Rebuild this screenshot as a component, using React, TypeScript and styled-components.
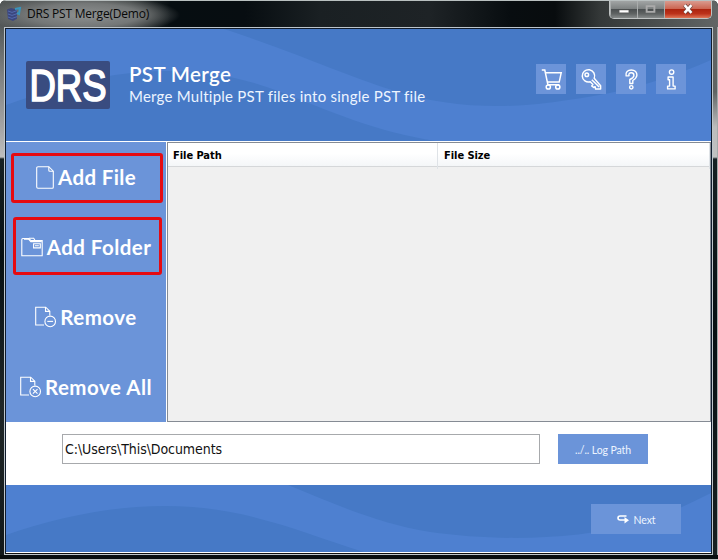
import React from "react";
import styled, { createGlobalStyle, css } from "styled-components";

const GlobalStyle = createGlobalStyle`
  html, body { margin: 0; padding: 0; overflow: hidden; }
  * { box-sizing: border-box; }
`;

const brandFont = css`font-family: Lato, "Open Sans", sans-serif;`;
const systemFont = css`font-family: "DejaVu Sans Condensed", "DejaVu Sans", sans-serif; font-stretch: condensed;`;

const WindowFrame = styled.div`
  width: 718px;
  height: 560px;
  display: grid;
  grid-template-columns: 4px 709px 5px;
  grid-template-rows: 27px 528px 5px;
  background: #0b1012;
  border-radius: 6px 6px 0 0;
  overflow: hidden;
`;

const TitleBar = styled.header`
  grid-column: 1 / -1;
  display: flex;
  align-items: flex-start;
  border-top: 1px solid #b9c0c0;
  padding-left: 6px;
  background:
    radial-gradient(ellipse 96px 20px at 84px 14px, #8d9090 0%, #747777 58%, rgba(70, 74, 75, 0) 100%),
    linear-gradient(90deg, #545858 0, #343939 130px, #060d11 170px, #070d11 245px, #1a2023 320px, #1e2326 430px, #080d10 510px, #080c0e 555px, #343838 600px, #626666 718px);
`;

const AppIcon = styled.svg`
  width: 16px;
  height: 16px;
  margin-top: 5px;
  flex: none;
`;

const WindowTitle = styled.span`
  font: 12px/17px "Open Sans", "Noto Sans", sans-serif;
  letter-spacing: -0.2px;
  color: #080808;
  margin: 4px auto 0 5px;
`;

const WindowControls = styled.div`
  display: flex;
  height: 18px;
  margin-right: 6px;
  border: 1px solid #bfc3c3;
  border-top: 0;
  border-radius: 0 0 5px 5px;
  overflow: hidden;
`;

const ControlButton = styled.button<{ $width: number; $close?: boolean }>`
  width: ${(p) => p.$width}px;
  height: 17px;
  padding: 0;
  border: 0;
  border-left: ${(p) => (p.$width === 27 || p.$close ? "1px solid #aaadad" : "0")};
  background: ${(p) =>
    p.$close
      ? "linear-gradient(#d99b8f 0, #cc6652 45%, #ad2510 50%, #bc321b 75%, #df7657 100%)"
      : "linear-gradient(#a1a4a4 0, #7e8282 45%, #4c5051 50%, #5f6363 75%, #878b8b 100%)"};
  svg { display: block; width: 100%; height: 17px; }
`;

const LeftEdge = styled.div`
  background: linear-gradient(#555a5a 0, #7c7f7f 45px, #a4a4a4 100px, #bebebe 130px, #172124 132px, #071013 230px, #202728 380px, #11181a 100%);
`;
const RightEdge = styled.div`
  background: linear-gradient(#5d6161 0, #606464 65px, #bcbcbc 100px, #c1c1c1 130px, #172124 132px, #071013 300px, #182022 100%);
  border-right: 1px solid #a4aaaa;
`;
const BottomEdge = styled.div`
  grid-column: 1 / -1;
  background: #080d0f;
  border-bottom: 1px solid #bbc0c0;
`;

const Client = styled.main`
  border: 1px solid #bdc5cb;
  background: #fff;
`;

const ClientInner = styled.div`
  height: 526px;
  border: 1px solid #101c2d;
  border-bottom-color: #101010;
  display: flex;
  flex-direction: column;
`;

const WavePanel = styled.div<{ $height: number }>`
  display: grid;
  flex: none;
  height: ${(p) => p.$height}px;
  background: #4679c6;
  > * { grid-area: 1 / 1; }
`;

const Wave = styled.svg`
  width: 705px;
  height: 100%;
  display: block;
  fill: #4e80d0;
`;

const HeaderContent = styled.div`
  display: flex;
  align-items: flex-start;
  padding: 32px 25px 0 20px;
`;

const Logo = styled.svg`
  width: 84px;
  height: 48px;
  flex: none;
  overflow: visible;
`;

const ProductText = styled.div`
  ${brandFont}
  color: #fff;
  margin: 1px auto 0 19px;
  white-space: nowrap;
`;

const ProductName = styled.h1`
  font-size: 20.5px;
  line-height: 24px;
  font-weight: 600;
  letter-spacing: 0.35px;
  margin: 0;
`;

const ProductTagline = styled.p`
  font-size: 15px;
  line-height: 20px;
  letter-spacing: 0.24px;
  margin: 0;
  color: #edf4ff;
`;

const HeaderActions = styled.nav`
  display: flex;
  gap: 10px;
  margin-top: 3px;
`;

const IconButton = styled.button`
  width: 30px;
  height: 30px;
  border: 0;
  padding: 0;
  background: #6c94d9;
  svg { display: block; width: 30px; height: 30px; }
`;

const Workspace = styled.div`
  height: 281px;
  flex: none;
  display: flex;
  border-top: 1px solid #fff;
`;

const Sidebar = styled.aside`
  width: 160px;
  flex: none;
  margin-right: 1px;
  background: #6b94d9;
  display: grid;
  grid-template-rows: repeat(4, 70px);
`;

const SideButton = styled.button<{ $gap: number; $spacing: number }>`
  ${brandFont}
  position: relative;
  display: flex;
  align-items: center;
  justify-content: center;
  gap: ${(p) => p.$gap}px;
  border: 0;
  padding: 0;
  background: transparent;
  color: #fff;
  font-size: 20.5px;
  line-height: 26px;
  font-weight: 700;
  letter-spacing: ${(p) => p.$spacing}px;
  white-space: nowrap;
  svg { flex: none; overflow: visible; }
`;

const Highlight = styled.span<{ $top: number; $left: number; $width: number; $height: number }>`
  position: absolute;
  top: ${(p) => p.$top}px;
  left: ${(p) => p.$left}px;
  width: ${(p) => p.$width}px;
  height: ${(p) => p.$height}px;
  border: 3px solid #e50b12;
  border-radius: 3px;
`;

const FileTable = styled.section`
  flex: 1;
  border: 1px solid #858b94;
  background: #f0f0f0;
`;

const TableHeader = styled.div`
  height: 24px;
  display: grid;
  grid-template-columns: 270px 1fr;
  background: linear-gradient(#fff 45%, #f4f6f8);
  border-bottom: 1px solid #d5d7d9;
`;

const ColumnTitle = styled.div`
  ${systemFont}
  font-size: 11px;
  font-weight: 700;
  line-height: 26px;
  letter-spacing: -0.05px;
  padding-left: 5px;
  border-right: 1px solid #dfe3e7;
  & + & { padding-left: 6px; }
`;

const PathRow = styled.div`
  height: 63px;
  flex: none;
  display: flex;
  align-items: flex-start;
  gap: 18px;
  padding: 12px 0 0 56px;
`;

const PathInput = styled.input`
  ${systemFont}
  width: 478px;
  height: 30px;
  padding: 0 2px 1px;
  border: 1px solid #a7a9ac;
  border-radius: 0;
  background: #fff;
  color: #111;
  font-size: 14px;
  letter-spacing: -0.07px;
  outline: 0;
`;

const ActionButton = styled.button`
  ${brandFont}
  width: 90px;
  height: 30px;
  border: 0;
  padding: 1px 0 0;
  display: flex;
  align-items: center;
  justify-content: center;
  gap: 5px;
  background: #6b94d9;
  color: #edf5ff;
  font-size: 10.5px;
  letter-spacing: -0.1px;
`;

const FooterContent = styled.div`
  display: flex;
  justify-content: flex-end;
  padding: 19px 30px 0 0;
`;

const FileOutline = ({ badge }: { badge?: "minus" | "cross" }) =>
  badge ? (
    <svg width="21" height="22" viewBox="0 0 21 22" fill="none" stroke="#fff" strokeWidth="1.1">
      <path d="M9 19H.7V1.2h10l4.1 4v4.4M10.5 1.4v4h4.2" />
      <circle cx="15.2" cy="15.4" r="5.3" />
      <path d={badge === "minus" ? "M12.3 15.4h5.8" : "m12.9 13.1 4.6 4.6m0-4.6-4.6 4.6"} />
    </svg>
  ) : (
    <svg width="18" height="23" viewBox="0 0 18 23" fill="none" stroke="#fff" strokeWidth="1.1">
      <path d="M2 .7h10.8l4.5 4.5v16.1q0 1-1 1H2q-1.3 0-1.3-1.2V2Q.7.7 2 .7Z" />
      <path d="M12.8.8v3.4q0 1 1 1h3.4" />
    </svg>
  );

const FolderOutline = () => (
  <svg width="22" height="20" viewBox="0 0 22 20" fill="none" stroke="#fff" strokeWidth="1.1">
    <path d="M.8 18.8V2.5q0-1 1-1h6l2 2h11.4v15.3H.8Z" />
    <path d="M3 2.2h4.6l2.2 2.4h11M8 1.3h4.7l1.2 2" />
    <path d="M12.6 6.7h6.7v4.2h-6.7zM14 8.8h3.8" />
  </svg>
);

const actions = [
  { label: "Add File", icon: <FileOutline />, gap: 4, spacing: 0.35, mark: { $top: 11, $left: 5, $width: 152, $height: 50 } },
  { label: "Add Folder", icon: <FolderOutline />, gap: 4, spacing: 0.45, mark: { $top: 5, $left: 7, $width: 149, $height: 58 } },
  { label: "Remove", icon: <FileOutline badge="minus" />, gap: 4, spacing: 0.5 },
  { label: "Remove All", icon: <FileOutline badge="cross" />, gap: 4, spacing: 0.5 },
];

const CartIcon = () => (
  <svg viewBox="0 0 30 30" fill="none" stroke="#fff" strokeWidth="1.5">
    <path d="M5.8 6h3l3.1 14.7h11.5M9.5 8.8h15.7l-2 9.3H11.5" />
    <circle cx="12.3" cy="23" r="2.1" /><circle cx="21.8" cy="23" r="2.1" />
  </svg>
);

const KeyIcon = () => (
  <svg viewBox="0 0 30 30" fill="none" stroke="#fff" strokeWidth="1.5" strokeLinejoin="round">
    <path d="M18.2 14.2a6.2 6.2 0 1 0-4 3.6l2.7 2.8-1.2 1.3 2 1.6 1.4-.8.5 2.3h5v-3.3Z" />
    <circle cx="10.8" cy="10.7" r="1.8" /><path d="m15.8 15.8 7.4 7.2" />
  </svg>
);

const QuestionIcon = () => (
  <svg viewBox="0 0 30 30" fill="none" stroke="#fff" strokeWidth="1.4" strokeLinejoin="round">
    <path d="M10.1 11.9C9.3 8.1 11.8 6 15.3 6c3.7 0 5.8 2.3 5.6 5.3-.2 2.7-2.6 4.3-4.1 5.2v3h-3v-4c2.6-1.2 4.1-2.3 4.1-4.1 0-1.7-1-2.6-2.6-2.6-2 0-2.9 1.1-2.2 2.9Z" />
    <circle cx="15.3" cy="23.3" r="1.7" />
  </svg>
);

const InfoIcon = () => (
  <svg viewBox="0 0 30 30" fill="none" stroke="#fff" strokeWidth="1.4" strokeLinejoin="round">
    <circle cx="15.6" cy="8.1" r="2.2" />
    <path d="M12.1 13h5v9.1h2v2.8h-7.5v-2.8h2v-6.3h-1.5Z" />
  </svg>
);

export default function App() {
  return (
    <>
      <GlobalStyle />
      <WindowFrame>
        <TitleBar>
          <AppIcon viewBox="0 0 16 16">
            <path d="M1 3.5 5 2l6 1.4v9.4L7 15 2 13Z" fill="#3c477e" />
            <path d="m2 5 4 1.4 5-1.8M2 8l4 1.4 5-1.7M2 11l4 1.4 5-1.7" stroke="#536aae" fill="none" />
            <path d="m9 3 5-1-1 6-2-1" stroke="#3995bd" strokeWidth="2" fill="none" />
          </AppIcon>
          <WindowTitle>DRS PST Merge(Demo)</WindowTitle>
          <WindowControls>
            <ControlButton $width={27} aria-label="Minimize">
              <svg viewBox="0 0 27 17"><path d="M8.5 9h10v3h-10z" fill="#fff" stroke="#555" strokeWidth=".5" /></svg>
            </ControlButton>
            <ControlButton $width={27} aria-label="Maximize">
              <svg viewBox="0 0 27 17"><path d="M9 5h8v6H9z" fill="none" stroke="#aaa" strokeWidth="2" /></svg>
            </ControlButton>
            <ControlButton $width={47} $close aria-label="Close">
              <svg viewBox="0 0 47 17"><path d="m20 4 7 8m0-8-7 8" stroke="#68443f" strokeWidth="4" /><path d="m20 4 7 8m0-8-7 8" stroke="#fff" strokeWidth="2.6" /></svg>
            </ControlButton>
          </WindowControls>
        </TitleBar>
        <LeftEdge />
        <Client>
          <ClientInner>
            <WavePanel $height={112}>
              <Wave viewBox="0 0 705 112" preserveAspectRatio="none">
                <path d="M0 0H218C299 27 335 45 389 62 442 79 502 81 562 71 621 63 658 51 705 31V112H430C370 103 324 82 272 62 198 34 124 39 63 56Q28 66 0 76Z" />
              </Wave>
              <HeaderContent>
                <Logo viewBox="0 0 84 48">
                  <rect width="84" height="48" rx="2" fill="#394c80" />
                  <text x="3.5" y="40" textLength="77" lengthAdjust="spacingAndGlyphs" fill="#fff" stroke="#fff" strokeWidth="1.7" fontFamily="Liberation Sans, sans-serif" fontSize="45">DRS</text>
                </Logo>
                <ProductText>
                  <ProductName>PST Merge</ProductName>
                  <ProductTagline>Merge Multiple PST files into single PST file</ProductTagline>
                </ProductText>
                <HeaderActions>
                  <IconButton aria-label="Buy"><CartIcon /></IconButton>
                  <IconButton aria-label="Activate"><KeyIcon /></IconButton>
                  <IconButton aria-label="Help"><QuestionIcon /></IconButton>
                  <IconButton aria-label="About"><InfoIcon /></IconButton>
                </HeaderActions>
              </HeaderContent>
            </WavePanel>
            <Workspace>
              <Sidebar>
                {actions.map((a) => (
                  <SideButton key={a.label} $gap={a.gap} $spacing={a.spacing}>
                    {a.icon}<span>{a.label}</span>{a.mark && <Highlight {...a.mark} />}
                  </SideButton>
                ))}
              </Sidebar>
              <FileTable>
                <TableHeader><ColumnTitle>File Path</ColumnTitle><ColumnTitle>File Size</ColumnTitle></TableHeader>
              </FileTable>
            </Workspace>
            <PathRow>
              <PathInput defaultValue="C:\Users\This\Documents" aria-label="Log path" />
              <ActionButton>../.. Log Path</ActionButton>
            </PathRow>
            <WavePanel $height={67}>
              <Wave viewBox="0 0 705 67" preserveAspectRatio="none">
                <path d="M0 0H282C335 22 375 39 424 47 488 56 566 56 634 38 662 30 684 18 705 8V67H358C291 46 238 21 159 21 102 21 45 34 0 50Z" />
              </Wave>
              <FooterContent>
                <ActionButton>
                  <svg width="12" height="9" viewBox="0 0 12 9" fill="none" stroke="#fff" strokeWidth="1.6"><path d="M9.5 1H3.2Q1 1 1 3t2.2 2H8" /><path d="M7.5 2v6.4L12 5.2Z" fill="#fff" stroke="none" /></svg>
                  Next
                </ActionButton>
              </FooterContent>
            </WavePanel>
          </ClientInner>
        </Client>
        <RightEdge />
        <BottomEdge />
      </WindowFrame>
    </>
  );
}
